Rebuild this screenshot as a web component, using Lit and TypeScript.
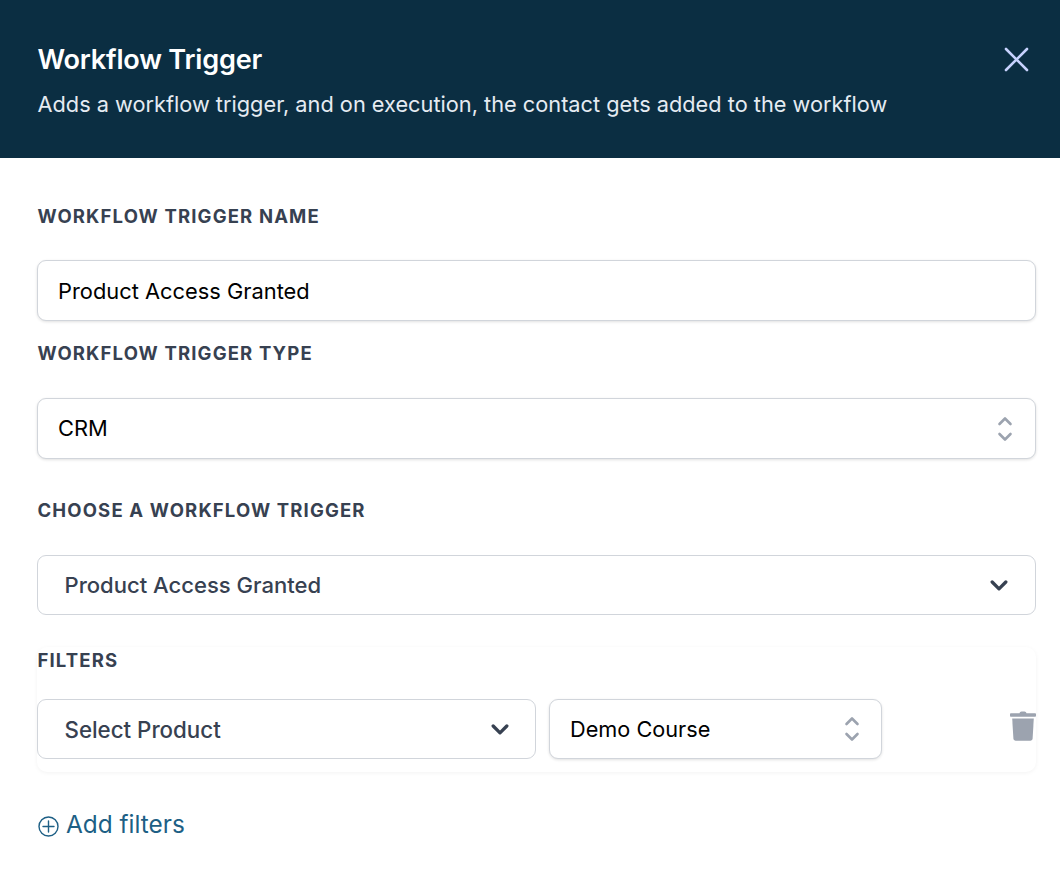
import { LitElement, html, css } from "lit";
import { customElement } from "lit/decorators.js";

const updown = html`<svg class="updown" viewBox="0 0 16 28" fill="none" stroke="#9ca3af" stroke-width="2.6" stroke-linecap="round" stroke-linejoin="round"><path d="M2.5 9 8 3.5 13.5 9"/><path d="M2.5 19 8 24.5 13.5 19"/></svg>`;
const chevron = html`<svg class="chev" viewBox="0 0 16 10" fill="none" stroke="#374151" stroke-width="3" stroke-linecap="round" stroke-linejoin="round"><path d="M1.800 1.800 8 8 14.200 1.800"/></svg>`;

@customElement("app-root")
export class AppRoot extends LitElement {
  static styles = css`
    :host { display: block; width: 1060px; height: 888px; background: #fff; font-family: Inter, "Liberation Sans", sans-serif; overflow: hidden; }
    * { box-sizing: border-box; }
    .head { height: 158px; background: #0b2e42; padding: 40px 24px 0 37.500px; position: relative; }
    h1 { margin: 0; font-size: 27.100px; line-height: 40px; font-weight: 600; color: #fff; letter-spacing: -0.2px; }
    .head p { margin: 9px 0 0; font-size: 21.750px; line-height: 30px; color: #e5ebf2; }
    .close { position: absolute; left: 1004px; top: 47px; width: 25px; height: 25px; }
    .body { padding: 0 24px 0 37px; }
    .label { font-size: 18.500px; line-height: 24px; font-weight: 650; letter-spacing: 1.150px; color: #374151; margin: 0; padding-left: 0.500px; }
    .box { height: 61px; border: 1px solid #d1d5db; border-radius: 9px; background: #fff; box-shadow: 0 1px 3px rgba(0,0,0,.12); display: flex; align-items: center; justify-content: space-between; font-size: 21.850px; color: #000; padding: 0 20px; }
    .box.sel { height: 60px; box-shadow: none; color: #374151; font-weight: 500; font-size: 22.050px; padding: 0 27px 0 26.500px; }
    .updown { width: 16px; height: 28px; }
    .chev { width: 18px; height: 11px; }
    .l1 { margin-top: 46px; }
    .b1 { margin-top: 32px; }
    .l2 { margin-top: 20px; }
    .b2 { margin-top: 33px; padding-right: 22px; }
    .b2 span { margin-top: -2px; }
    .l3 { margin-top: 39px; }
    .b3 { margin-top: 33px; }
    .card { margin-top: 32px; height: 125px; border-radius: 10px; box-shadow: 0 1px 4px rgba(0,0,0,.05); }
    .l4 { padding-top: 1px; }
    .row { display: flex; align-items: flex-start; margin-top: 27px; }
    .f1 { width: 499px; }
    .box.sel.f1 { padding-right: 26px; font-size: 22.300px; }
    .f2 { width: 333px; margin-left: 13px; height: 60px; padding-right: 21px; font-size: 21.700px; }
    .trash { margin-left: auto; margin-top: 12px; width: 26px; height: 30px; }
    .add { display: flex; align-items: center; margin-top: 36px; color: #1d5f85; font-size: 24.400px; line-height: 32px; gap: 7px; padding-left: 1px; }
    .add svg { width: 21px; height: 21px; margin-top: 4px; }
  `;
  render() {
    return html`
      <div class="head">
        <h1>Workflow Trigger</h1>
        <p>Adds a workflow trigger, and on execution, the contact gets added to the workflow</p>
        <svg class="close" viewBox="0 0 25 25" fill="none" stroke="#c7d2fe" stroke-width="2.6" stroke-linecap="round"><path d="M2 2 23 23M23 2 2 23"/></svg>
      </div>
      <div class="body">
        <div class="label l1">WORKFLOW TRIGGER NAME</div>
        <div class="box b1">Product Access Granted</div>
        <div class="label l2">WORKFLOW TRIGGER TYPE</div>
        <div class="box b2"><span>CRM</span>${updown}</div>
        <div class="label l3">CHOOSE A WORKFLOW TRIGGER</div>
        <div class="box sel b3"><span>Product Access Granted</span>${chevron}</div>
        <div class="card">
          <div class="label l4">FILTERS</div>
          <div class="row">
            <div class="box sel f1"><span>Select Product</span>${chevron}</div>
            <div class="box f2"><span>Demo Course</span>${updown}</div>
            <svg class="trash" viewBox="0 0 26 30" fill="#9ca3af"><path d="M9.500 2.200C10 1 11 .6 13 .6s3 .4 3.500 1.600H25c.6 0 1 .5 1 1v1.600c0 .5-.4 1-1 1H1c-.6 0-1-.5-1-1V3.200c0-.5.4-1 1-1z"/><path d="M2.200 7.500h21.600l-1.200 20c-.1 1.300-1 2.200-2.300 2.200H5.700c-1.300 0-2.200-.9-2.300-2.200z"/></svg>
          </div>
        </div>
        <div class="add">
          <svg viewBox="0 0 21 21" fill="none" stroke="#1d5f85" stroke-width="1.4" stroke-linecap="round"><circle cx="10.500" cy="10.500" r="9.500"/><path d="M10.500 5v11M5 10.500h11"/></svg>
          <span>Add filters</span>
        </div>
      </div>
    `;
  }
}
